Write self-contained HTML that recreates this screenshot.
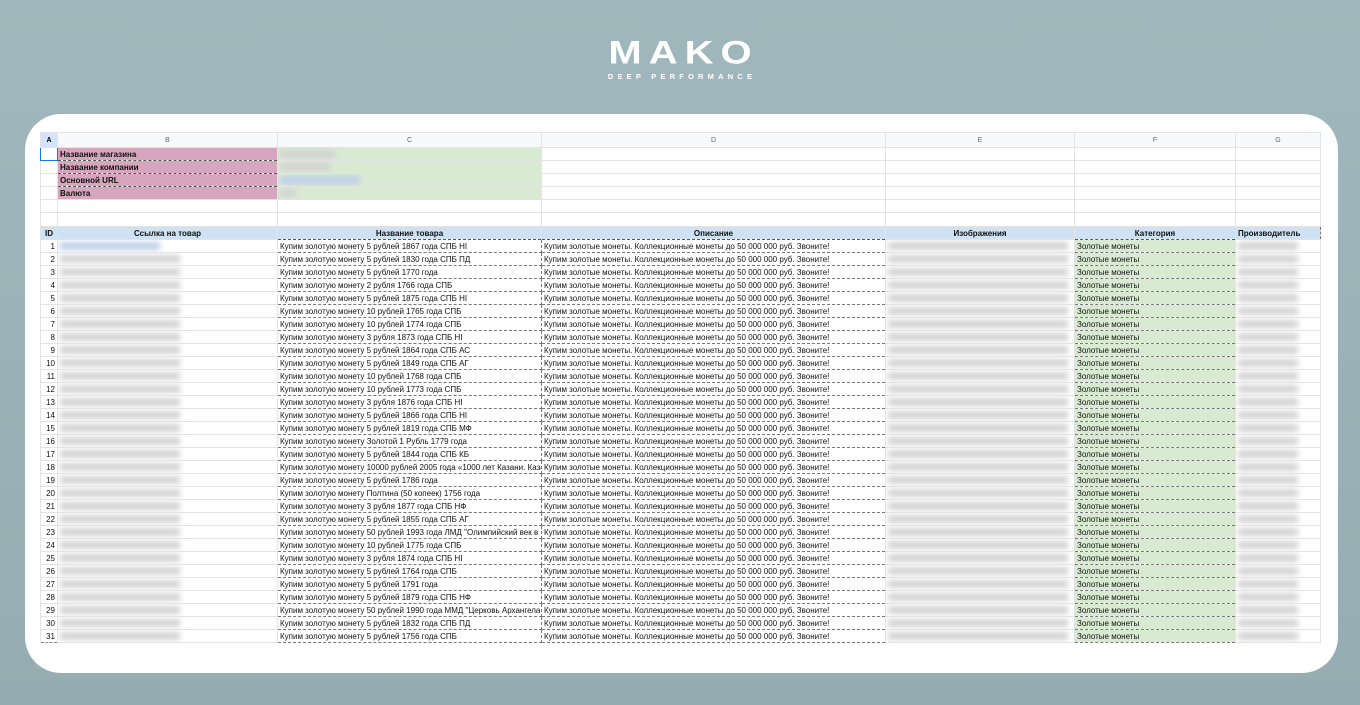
<!DOCTYPE html>
<html><head><meta charset="utf-8">
<style>
*{margin:0;padding:0;box-sizing:border-box}
body{width:1360px;height:705px;overflow:hidden;background:linear-gradient(180deg,#a0b8bd,#95adb2);font-family:"Liberation Sans","Noto Sans CJK SC",sans-serif;position:relative}
.logo{position:absolute;left:590px;top:34px;width:180px;text-align:center;color:#fff}
.logo .m{font-size:40px;font-weight:bold;letter-spacing:7px;padding-left:7px;line-height:38px;transform:scaleY(.8)}
.logo .s{font-size:7.5px;letter-spacing:4.2px;margin-top:0px;font-weight:bold;padding-left:4px}
.card{position:absolute;left:25px;top:114px;width:1313px;height:559px;background:#fff;border-radius:36px}
table{position:absolute;left:40px;top:132px;border-collapse:collapse;table-layout:fixed;width:1280px;font-size:8px;color:#111}
td{border:1px solid #e3e3e3;height:13px;padding:0 2px;white-space:nowrap;overflow:hidden;line-height:11px}
tr.h td{height:15px;background:#f8f9fa;color:#666;text-align:center;font-size:7px}
tr.h td:first-child{background:#d3e3fd;color:#000;font-weight:bold}
.p{background:#d5a6bd;font-weight:bold;border:1px dashed #555}
.g{background:#d9ead3}
.hd td{background:#cfe2f3;font-weight:bold;text-align:center;border-bottom:1px dashed #555;border-right:1px dashed #777}
.n{text-align:right;border-bottom:1px dashed #888}
.d{border:1px dashed #777;border-width:0 1px 1px 1px}
.f{background:#d9ead3;border:1px dashed #777;border-width:0 1px 1px 1px}
.bl{display:inline-block;height:8px;background:#d2d2d2;filter:blur(3px);vertical-align:middle}
.bb{background:#bccfea}
</style></head><body>
<div class="logo"><div class="m">MAKO</div><div class="s">DEEP PERFORMANCE</div></div>
<div class="card"></div>
<table>
<colgroup><col style="width:17px"><col style="width:220px"><col style="width:264px"><col style="width:344px"><col style="width:189px"><col style="width:161px"><col style="width:85px"></colgroup>
<tr class="h"><td>A</td><td>B</td><td>C</td><td>D</td><td>E</td><td>F</td><td>G</td></tr>
<tr><td style="border:1.5px solid #1a73e8"></td><td class="p">Название магазина</td><td class="g"><span class="bl" style="width:55px"></span></td><td></td><td></td><td></td><td></td></tr>
<tr><td></td><td class="p">Название компании</td><td class="g"><span class="bl" style="width:50px"></span></td><td></td><td></td><td></td><td></td></tr>
<tr><td></td><td class="p">Основной URL</td><td class="g"><span class="bl bb" style="width:80px"></span></td><td></td><td></td><td></td><td></td></tr>
<tr><td></td><td class="p">Валюта</td><td class="g"><span class="bl" style="width:16px"></span></td><td></td><td></td><td></td><td></td></tr>
<tr><td></td><td></td><td></td><td></td><td></td><td></td><td></td></tr>
<tr><td style="height:14px"></td><td></td><td></td><td></td><td></td><td></td><td></td></tr>
<tr class="hd"><td>ID</td><td>Ссылка на товар</td><td>Название товара</td><td>Описание</td><td>Изображения</td><td>Категория</td><td style="text-align:left">Производитель</td></tr>
<tr><td class="n">1</td><td><span class="bl bb" style="width:100px"></span></td><td class="d">Купим золотую монету 5 рублей 1867 года СПБ НІ</td><td class="d">Купим золотые монеты. Коллекционные монеты до 50 000 000 руб. Звоните!</td><td><span class="bl" style="width:180px"></span></td><td class="f">Золотые монеты</td><td><span class="bl" style="width:60px"></span></td></tr>
<tr><td class="n">2</td><td><span class="bl" style="width:120px"></span></td><td class="d">Купим золотую монету 5 рублей 1830 года СПБ ПД</td><td class="d">Купим золотые монеты. Коллекционные монеты до 50 000 000 руб. Звоните!</td><td><span class="bl" style="width:180px"></span></td><td class="f">Золотые монеты</td><td><span class="bl" style="width:60px"></span></td></tr>
<tr><td class="n">3</td><td><span class="bl" style="width:120px"></span></td><td class="d">Купим золотую монету 5 рублей 1770 года</td><td class="d">Купим золотые монеты. Коллекционные монеты до 50 000 000 руб. Звоните!</td><td><span class="bl" style="width:180px"></span></td><td class="f">Золотые монеты</td><td><span class="bl" style="width:60px"></span></td></tr>
<tr><td class="n">4</td><td><span class="bl" style="width:120px"></span></td><td class="d">Купим золотую монету 2 рубля 1766 года СПБ</td><td class="d">Купим золотые монеты. Коллекционные монеты до 50 000 000 руб. Звоните!</td><td><span class="bl" style="width:180px"></span></td><td class="f">Золотые монеты</td><td><span class="bl" style="width:60px"></span></td></tr>
<tr><td class="n">5</td><td><span class="bl" style="width:120px"></span></td><td class="d">Купим золотую монету 5 рублей 1875 года СПБ НІ</td><td class="d">Купим золотые монеты. Коллекционные монеты до 50 000 000 руб. Звоните!</td><td><span class="bl" style="width:180px"></span></td><td class="f">Золотые монеты</td><td><span class="bl" style="width:60px"></span></td></tr>
<tr><td class="n">6</td><td><span class="bl" style="width:120px"></span></td><td class="d">Купим золотую монету 10 рублей 1765 года СПБ</td><td class="d">Купим золотые монеты. Коллекционные монеты до 50 000 000 руб. Звоните!</td><td><span class="bl" style="width:180px"></span></td><td class="f">Золотые монеты</td><td><span class="bl" style="width:60px"></span></td></tr>
<tr><td class="n">7</td><td><span class="bl" style="width:120px"></span></td><td class="d">Купим золотую монету 10 рублей 1774 года СПБ</td><td class="d">Купим золотые монеты. Коллекционные монеты до 50 000 000 руб. Звоните!</td><td><span class="bl" style="width:180px"></span></td><td class="f">Золотые монеты</td><td><span class="bl" style="width:60px"></span></td></tr>
<tr><td class="n">8</td><td><span class="bl" style="width:120px"></span></td><td class="d">Купим золотую монету 3 рубля 1873 года СПБ НІ</td><td class="d">Купим золотые монеты. Коллекционные монеты до 50 000 000 руб. Звоните!</td><td><span class="bl" style="width:180px"></span></td><td class="f">Золотые монеты</td><td><span class="bl" style="width:60px"></span></td></tr>
<tr><td class="n">9</td><td><span class="bl" style="width:120px"></span></td><td class="d">Купим золотую монету 5 рублей 1864 года СПБ АС</td><td class="d">Купим золотые монеты. Коллекционные монеты до 50 000 000 руб. Звоните!</td><td><span class="bl" style="width:180px"></span></td><td class="f">Золотые монеты</td><td><span class="bl" style="width:60px"></span></td></tr>
<tr><td class="n">10</td><td><span class="bl" style="width:120px"></span></td><td class="d">Купим золотую монету 5 рублей 1849 года СПБ АГ</td><td class="d">Купим золотые монеты. Коллекционные монеты до 50 000 000 руб. Звоните!</td><td><span class="bl" style="width:180px"></span></td><td class="f">Золотые монеты</td><td><span class="bl" style="width:60px"></span></td></tr>
<tr><td class="n">11</td><td><span class="bl" style="width:120px"></span></td><td class="d">Купим золотую монету 10 рублей 1768 года СПБ</td><td class="d">Купим золотые монеты. Коллекционные монеты до 50 000 000 руб. Звоните!</td><td><span class="bl" style="width:180px"></span></td><td class="f">Золотые монеты</td><td><span class="bl" style="width:60px"></span></td></tr>
<tr><td class="n">12</td><td><span class="bl" style="width:120px"></span></td><td class="d">Купим золотую монету 10 рублей 1773 года СПБ</td><td class="d">Купим золотые монеты. Коллекционные монеты до 50 000 000 руб. Звоните!</td><td><span class="bl" style="width:180px"></span></td><td class="f">Золотые монеты</td><td><span class="bl" style="width:60px"></span></td></tr>
<tr><td class="n">13</td><td><span class="bl" style="width:120px"></span></td><td class="d">Купим золотую монету 3 рубля 1876 года СПБ НІ</td><td class="d">Купим золотые монеты. Коллекционные монеты до 50 000 000 руб. Звоните!</td><td><span class="bl" style="width:180px"></span></td><td class="f">Золотые монеты</td><td><span class="bl" style="width:60px"></span></td></tr>
<tr><td class="n">14</td><td><span class="bl" style="width:120px"></span></td><td class="d">Купим золотую монету 5 рублей 1866 года СПБ НІ</td><td class="d">Купим золотые монеты. Коллекционные монеты до 50 000 000 руб. Звоните!</td><td><span class="bl" style="width:180px"></span></td><td class="f">Золотые монеты</td><td><span class="bl" style="width:60px"></span></td></tr>
<tr><td class="n">15</td><td><span class="bl" style="width:120px"></span></td><td class="d">Купим золотую монету 5 рублей 1819 года СПБ МФ</td><td class="d">Купим золотые монеты. Коллекционные монеты до 50 000 000 руб. Звоните!</td><td><span class="bl" style="width:180px"></span></td><td class="f">Золотые монеты</td><td><span class="bl" style="width:60px"></span></td></tr>
<tr><td class="n">16</td><td><span class="bl" style="width:120px"></span></td><td class="d">Купим золотую монету Золотой 1 Рубль 1779 года</td><td class="d">Купим золотые монеты. Коллекционные монеты до 50 000 000 руб. Звоните!</td><td><span class="bl" style="width:180px"></span></td><td class="f">Золотые монеты</td><td><span class="bl" style="width:60px"></span></td></tr>
<tr><td class="n">17</td><td><span class="bl" style="width:120px"></span></td><td class="d">Купим золотую монету 5 рублей 1844 года СПБ КБ</td><td class="d">Купим золотые монеты. Коллекционные монеты до 50 000 000 руб. Звоните!</td><td><span class="bl" style="width:180px"></span></td><td class="f">Золотые монеты</td><td><span class="bl" style="width:60px"></span></td></tr>
<tr><td class="n">18</td><td><span class="bl" style="width:120px"></span></td><td class="d">Купим золотую монету 10000 рублей 2005 года «1000 лет Казани. Казань</td><td class="d">Купим золотые монеты. Коллекционные монеты до 50 000 000 руб. Звоните!</td><td><span class="bl" style="width:180px"></span></td><td class="f">Золотые монеты</td><td><span class="bl" style="width:60px"></span></td></tr>
<tr><td class="n">19</td><td><span class="bl" style="width:120px"></span></td><td class="d">Купим золотую монету 5 рублей 1786 года</td><td class="d">Купим золотые монеты. Коллекционные монеты до 50 000 000 руб. Звоните!</td><td><span class="bl" style="width:180px"></span></td><td class="f">Золотые монеты</td><td><span class="bl" style="width:60px"></span></td></tr>
<tr><td class="n">20</td><td><span class="bl" style="width:120px"></span></td><td class="d">Купим золотую монету Полтина (50 копеек) 1756 года</td><td class="d">Купим золотые монеты. Коллекционные монеты до 50 000 000 руб. Звоните!</td><td><span class="bl" style="width:180px"></span></td><td class="f">Золотые монеты</td><td><span class="bl" style="width:60px"></span></td></tr>
<tr><td class="n">21</td><td><span class="bl" style="width:120px"></span></td><td class="d">Купим золотую монету 3 рубля 1877 года СПБ НФ</td><td class="d">Купим золотые монеты. Коллекционные монеты до 50 000 000 руб. Звоните!</td><td><span class="bl" style="width:180px"></span></td><td class="f">Золотые монеты</td><td><span class="bl" style="width:60px"></span></td></tr>
<tr><td class="n">22</td><td><span class="bl" style="width:120px"></span></td><td class="d">Купим золотую монету 5 рублей 1855 года СПБ АГ</td><td class="d">Купим золотые монеты. Коллекционные монеты до 50 000 000 руб. Звоните!</td><td><span class="bl" style="width:180px"></span></td><td class="f">Золотые монеты</td><td><span class="bl" style="width:60px"></span></td></tr>
<tr><td class="n">23</td><td><span class="bl" style="width:120px"></span></td><td class="d">Купим золотую монету 50 рублей 1993 года ЛМД "Олимпийский век в России"</td><td class="d">Купим золотые монеты. Коллекционные монеты до 50 000 000 руб. Звоните!</td><td><span class="bl" style="width:180px"></span></td><td class="f">Золотые монеты</td><td><span class="bl" style="width:60px"></span></td></tr>
<tr><td class="n">24</td><td><span class="bl" style="width:120px"></span></td><td class="d">Купим золотую монету 10 рублей 1775 года СПБ</td><td class="d">Купим золотые монеты. Коллекционные монеты до 50 000 000 руб. Звоните!</td><td><span class="bl" style="width:180px"></span></td><td class="f">Золотые монеты</td><td><span class="bl" style="width:60px"></span></td></tr>
<tr><td class="n">25</td><td><span class="bl" style="width:120px"></span></td><td class="d">Купим золотую монету 3 рубля 1874 года СПБ НІ</td><td class="d">Купим золотые монеты. Коллекционные монеты до 50 000 000 руб. Звоните!</td><td><span class="bl" style="width:180px"></span></td><td class="f">Золотые монеты</td><td><span class="bl" style="width:60px"></span></td></tr>
<tr><td class="n">26</td><td><span class="bl" style="width:120px"></span></td><td class="d">Купим золотую монету 5 рублей 1764 года СПБ</td><td class="d">Купим золотые монеты. Коллекционные монеты до 50 000 000 руб. Звоните!</td><td><span class="bl" style="width:180px"></span></td><td class="f">Золотые монеты</td><td><span class="bl" style="width:60px"></span></td></tr>
<tr><td class="n">27</td><td><span class="bl" style="width:120px"></span></td><td class="d">Купим золотую монету 5 рублей 1791 года</td><td class="d">Купим золотые монеты. Коллекционные монеты до 50 000 000 руб. Звоните!</td><td><span class="bl" style="width:180px"></span></td><td class="f">Золотые монеты</td><td><span class="bl" style="width:60px"></span></td></tr>
<tr><td class="n">28</td><td><span class="bl" style="width:120px"></span></td><td class="d">Купим золотую монету 5 рублей 1879 года СПБ НФ</td><td class="d">Купим золотые монеты. Коллекционные монеты до 50 000 000 руб. Звоните!</td><td><span class="bl" style="width:180px"></span></td><td class="f">Золотые монеты</td><td><span class="bl" style="width:60px"></span></td></tr>
<tr><td class="n">29</td><td><span class="bl" style="width:120px"></span></td><td class="d">Купим золотую монету 50 рублей 1990 года ММД "Церковь Архангела Гавриила"</td><td class="d">Купим золотые монеты. Коллекционные монеты до 50 000 000 руб. Звоните!</td><td><span class="bl" style="width:180px"></span></td><td class="f">Золотые монеты</td><td><span class="bl" style="width:60px"></span></td></tr>
<tr><td class="n">30</td><td><span class="bl" style="width:120px"></span></td><td class="d">Купим золотую монету 5 рублей 1832 года СПБ ПД</td><td class="d">Купим золотые монеты. Коллекционные монеты до 50 000 000 руб. Звоните!</td><td><span class="bl" style="width:180px"></span></td><td class="f">Золотые монеты</td><td><span class="bl" style="width:60px"></span></td></tr>
<tr><td class="n">31</td><td><span class="bl" style="width:120px"></span></td><td class="d">Купим золотую монету 5 рублей 1756 года СПБ</td><td class="d">Купим золотые монеты. Коллекционные монеты до 50 000 000 руб. Звоните!</td><td><span class="bl" style="width:180px"></span></td><td class="f">Золотые монеты</td><td><span class="bl" style="width:60px"></span></td></tr>
</table>
</body></html>
